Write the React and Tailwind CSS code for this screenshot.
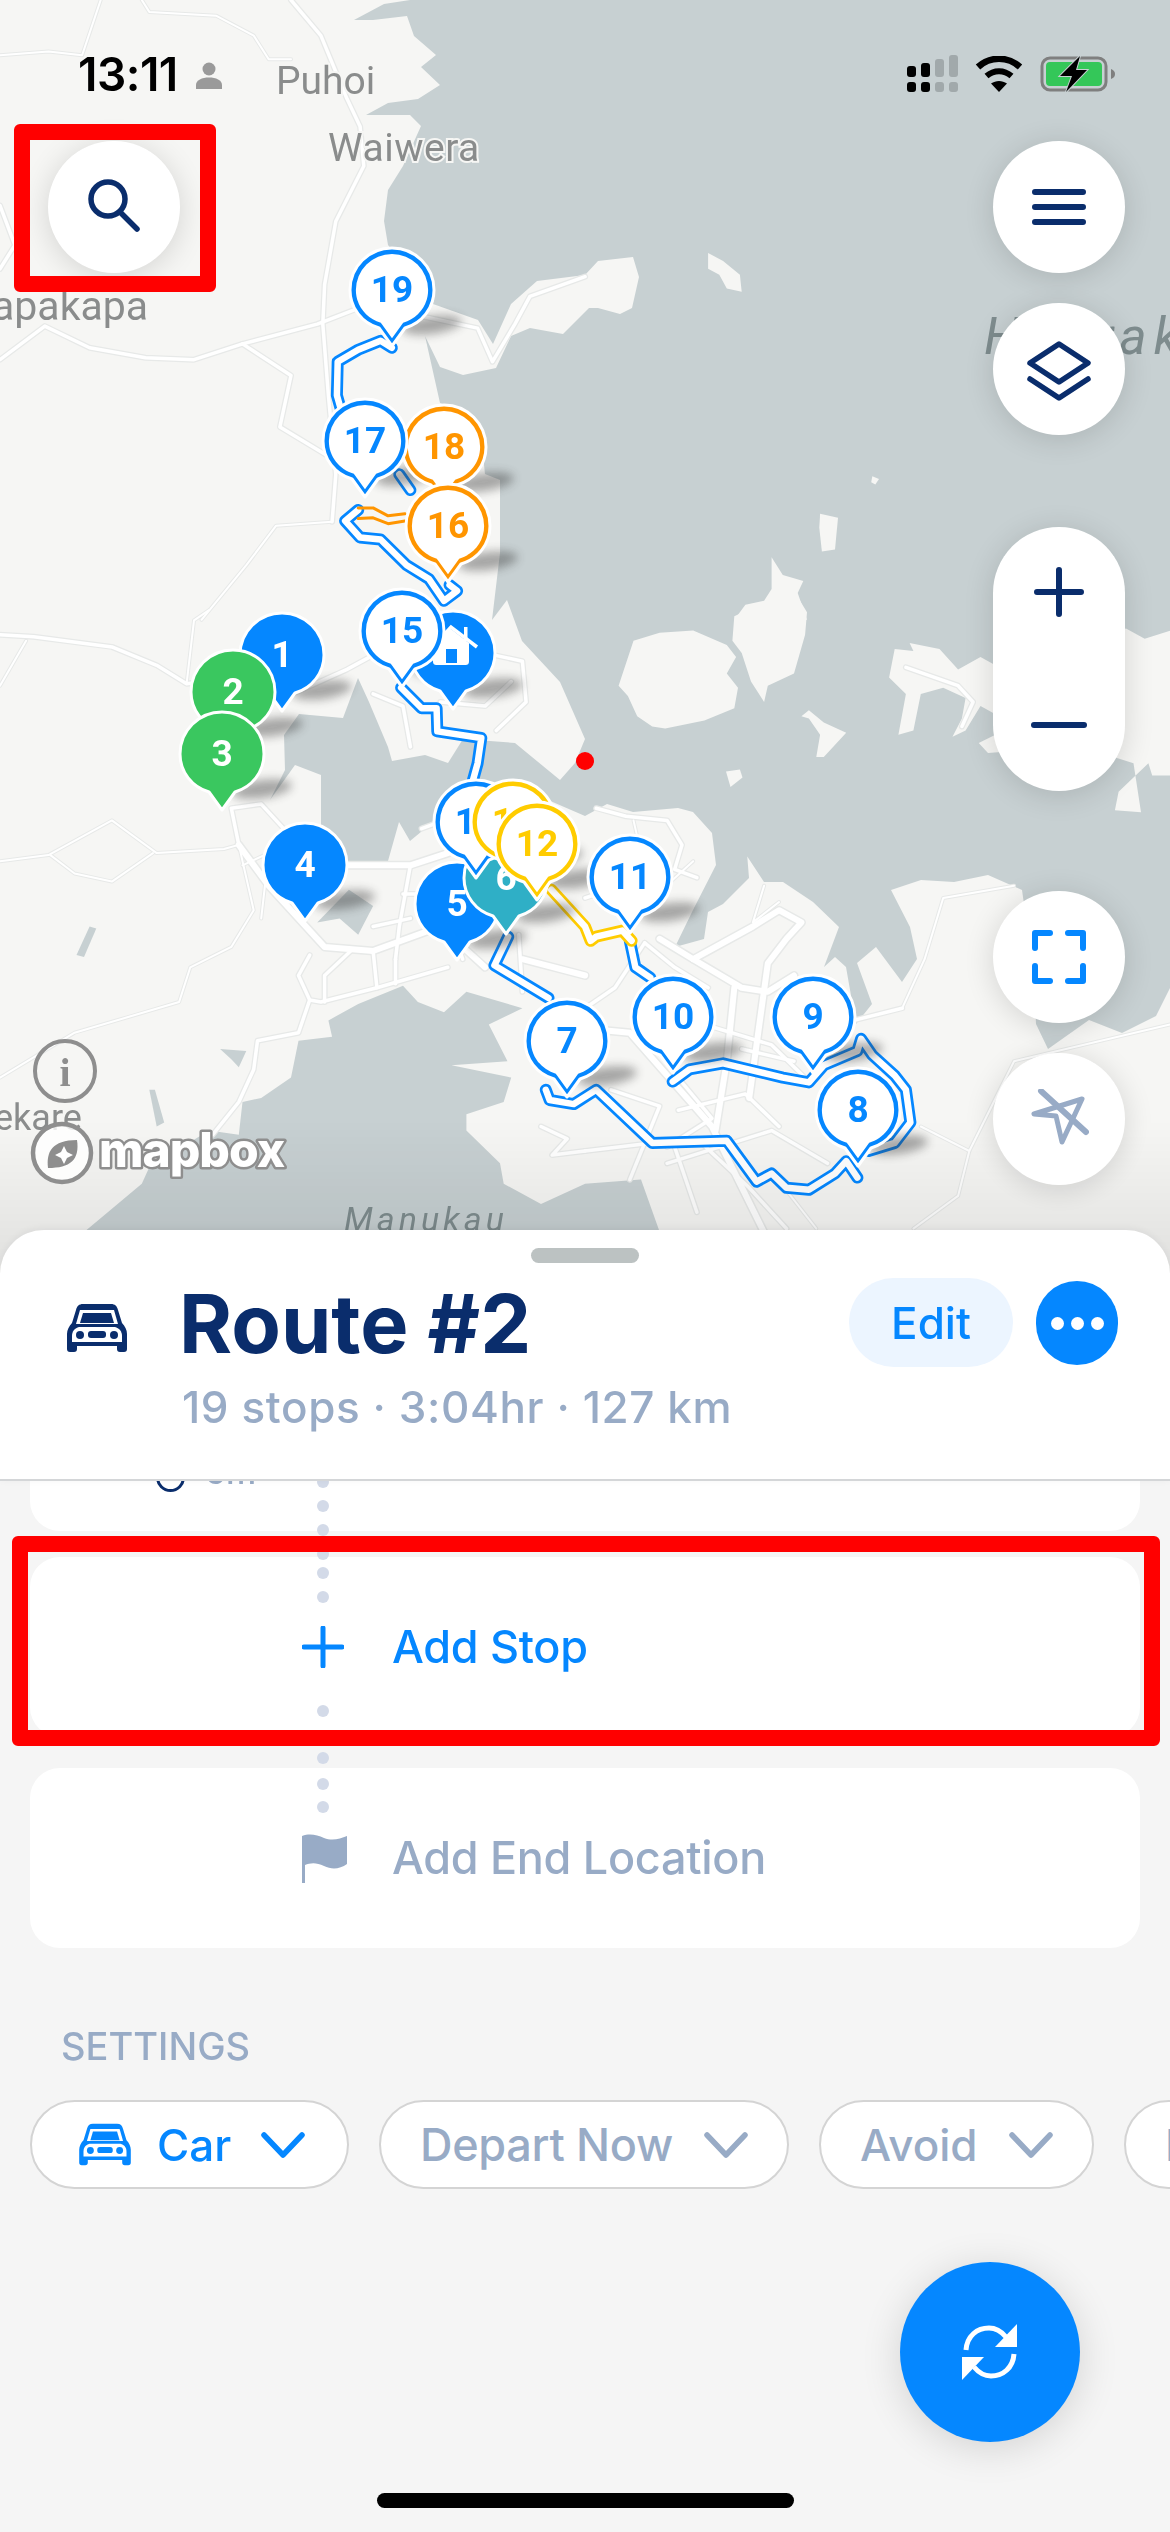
import React from "react";

const Z = { 1: [0, 0, 2.68, 2.53], 2: [585, 0, 2.68, 2.53], 3: [0, 600, 2.68, 2.45], 4: [585, 600, 2.68, 2.45] };
const P = (z, arr) => arr.map(([x, y]) => `${(Z[z][0] + x / Z[z][2]).toFixed(1)},${(Z[z][1] + y / Z[z][3]).toFixed(1)}`).join(" ");

const hauraki = "485,0 1170,0 1170,988 1156,1016 1122,1033 1089,1020 1048,1049 1036,1024 1033,967 1022,890 988,875 954,882 921,880 891,890 910,927 917,959 902,982 876,947 857,963 872,1004 856,1024 846,967 835,957 824,967 839,927 813,902 783,882 764,882 745,853 744,816 749,878 723,904 708,912 704,939 675,947 693,910 716,865 712,833 693,812 678,808 633,812 607,804 585,816 548,800 433,822 410,841 399,822 388,861 347,861 321,830 321,775 295,765 270,800 258,824 285,770 284,735 299,714 343,718 358,678 369,702 388,747 392,761 425,755 448,763 463,739 515,743 560,780 575,763 585,739 560,682 522,641 507,600 492,620 500,553 500,480 485,474 481,438 459,411 440,403 425,336 440,367 463,375 496,368 511,336 530,328 563,334 589,308 598,308 620,314 632,308 639,277 633,257 598,261 585,275 537,281 511,304 493,344 478,320 433,304 388,245 384,221 388,190 403,166 421,126 410,115 366,115 388,103 418,99 440,85 421,67 436,55 414,36 407,16 373,20 354,20 384,4 410,0";

const manukau = [[200, 1568], [380, 1430], [400, 1390], [560, 1300], [640, 1310], [650, 1230], [700, 1220], [780, 1170], [800, 1080], [890, 1070], [880, 1030], [960, 990], [1080, 945], [1120, 985], [1190, 1010], [1250, 960], [1400, 1000], [1310, 1040], [1360, 1130], [1210, 1140], [1370, 1170], [1350, 1230], [1250, 1260], [1250, 1300], [1340, 1380], [1350, 1430], [1450, 1480], [1568, 1430], [1718, 1420], [1788, 1600], [200, 1600]];

const islands4 = [
  [[90, 210], [130, 100], [200, 80], [290, 75], [380, 110], [405, 140], [380, 180], [410, 215], [400, 265], [320, 295], [215, 315], [180, 310], [140, 285], [115, 235]],
  [[395, 100], [400, 40], [470, 10], [575, 0], [595, 30], [590, 85], [560, 180], [490, 210], [480, 250], [445, 200], [420, 130]],
  [[580, 285], [600, 270], [640, 300], [700, 325], [640, 385], [620, 385], [630, 330], [600, 290]],
  [[378, 420], [415, 415], [422, 435], [390, 458]],
  [[815, 190], [830, 120], [880, 125], [870, 105], [950, 120], [1000, 170], [1060, 140], [1100, 160], [1100, 280], [1060, 260], [1020, 320], [985, 335], [1010, 290], [1020, 240], [960, 215], [900, 230], [880, 320], [840, 330], [860, 230]],
  [[1055, 350], [1100, 330], [1150, 370], [1080, 375]],
  [[1380, 90], [1450, 70], [1500, 95], [1568, 75], [1568, 430], [1520, 430], [1510, 400], [1430, 470], [1420, 515], [1490, 520], [1470, 400], [1400, 380]],
];
const islands2 = [
  [[330, 640], [370, 660], [415, 695], [420, 738], [380, 730], [360, 695], [330, 680]],
  [[770, 1205], [788, 1212], [778, 1226], [767, 1220]],
  [[630, 1300], [678, 1310], [670, 1390], [635, 1395], [628, 1335]],
  [[500, 1410], [530, 1455], [585, 1470], [570, 1500], [595, 1568], [400, 1568], [430, 1530], [480, 1520], [500, 1490]],
];
const lakes3 = [
  [[205, 870], [240, 800], [258, 805], [225, 875]],
  [[590, 1100], [660, 1105], [640, 1145], [620, 1125]],
  [[400, 1200], [415, 1200], [440, 1280], [420, 1290]],
  [[850, 790], [935, 710], [1000, 750], [960, 820], [910, 780]],
];
const urban3 = [
  [[640, 560], [760, 560], [930, 800], [1300, 640], [1568, 620], [1568, 1000], [1200, 1000], [1000, 960], [860, 990], [700, 800]],
  [[980, 200], [1140, 100], [1400, 60], [1500, 300], [1400, 400], [1100, 340]],
];

const roads = [
  [1, [[780, 0], [860, 90], [930, 250], [965, 320], [975, 420], [900, 560], [870, 720], [865, 820], [880, 1000], [900, 1200], [890, 1320]], 1],
  [1, [[0, 140], [130, 130], [220, 140], [270, 0]], 0],
  [1, [[380, 0], [400, 30], [580, 40], [680, 90], [720, 150], [780, 150]], 0],
  [1, [[0, 910], [120, 825], [240, 880], [390, 905], [520, 910], [650, 870], [850, 820], [960, 780]], 1],
  [1, [[650, 870], [780, 950], [750, 1080], [890, 1160]], 1],
  [1, [[960, 780], [1130, 800], [1280, 830], [1320, 915], [1380, 820], [1420, 750], [1568, 700]], 1],
  [1, [[890, 1320], [740, 1330], [660, 1430], [540, 1568]], 0],
  [1, [[0, 520], [40, 620], [0, 680]], 1],
  [3, [[0, 85], [90, 90], [300, 115], [420, 160], [500, 205], [640, 190], [760, 240], [930, 170], [1010, 130]], 1],
  [3, [[70, 100], [0, 210]], 0],
  [3, [[500, 205], [520, 50], [560, 25]], 0],
  [3, [[0, 640], [130, 625], [300, 540], [420, 620], [600, 610], [640, 600], [680, 760], [620, 850], [510, 900], [480, 985], [350, 1020], [200, 1060], [0, 1170]], 0],
  [3, [[135, 625], [200, 670], [300, 690], [410, 620]], 0],
  [3, [[640, 600], [620, 510], [700, 500], [760, 560]], 1],
  [3, [[930, 650], [1100, 650], [1200, 620]], 2],
  [3, [[640, 600], [720, 700], [870, 850], [1000, 860], [1180, 800], [1300, 900]], 2],
  [3, [[830, 870], [800, 920], [830, 980], [860, 985], [1010, 950], [1200, 900]], 1],
  [3, [[830, 980], [800, 1060], [690, 1080], [680, 1150], [640, 1230], [570, 1310]], 1],
  [3, [[1000, 860], [1010, 950]], 1],
  [3, [[1060, 880], [1060, 940]], 1],
  [3, [[1100, 650], [1070, 800], [1060, 880]], 1],
  [3, [[940, 860], [870, 920], [870, 985]], 1],
  [3, [[650, 650], [720, 620], [700, 780]], 0],
  [3, [[1000, 230], [1080, 260], [1100, 360]], 1],
  [3, [[1300, 130], [1400, 150], [1410, 250], [1330, 320]], 1],
  [3, [[1180, 250], [1300, 260], [1370, 200]], 1],
  [3, [[1130, 560], [1220, 530]], 1],
  [3, [[1400, 880], [1568, 920]], 2],
  [3, [[1390, 820], [1400, 960]], 1],
  [3, [[1450, 1290], [1520, 1320], [1480, 1360], [1568, 1350]], 1],
  [3, [[1080, 720], [1180, 720], [1240, 880]], 1],
  [3, [[1000, 800], [1100, 780]], 1],
  [4, [[200, 830], [290, 880], [420, 950], [490, 960], [560, 920]], 2],
  [4, [[290, 880], [450, 800], [520, 760], [580, 790], [540, 830], [490, 890], [440, 1220]], 2],
  [4, [[400, 950], [380, 1130], [350, 1300]], 2],
  [4, [[0, 1050], [120, 1060], [340, 1290], [410, 1420], [490, 1568]], 2],
  [4, [[180, 1330], [0, 1350]], 1],
  [4, [[220, 1380], [500, 1300], [650, 1380]], 1],
  [4, [[240, 1340], [300, 1500]], 1],
  [4, [[900, 1290], [1030, 1350], [1150, 1130], [1568, 1040]], 0],
  [4, [[1030, 1350], [1000, 1460], [880, 1540]], 0],
  [4, [[850, 1000], [910, 880], [960, 730], [1150, 700]], 0],
  [4, [[720, 1030], [850, 1000]], 1],
  [4, [[30, 510], [110, 530], [220, 540], [260, 600], [240, 660], [300, 680]], 1],
  [4, [[130, 540], [150, 620], [230, 690], [290, 640]], 0],
  [4, [[100, 700], [0, 730]], 1],
  [4, [[860, 165], [1000, 210], [1040, 250], [1010, 310]], 1],
  [4, [[480, 700], [450, 790], [520, 740]], 0],
  [4, [[70, 1200], [200, 1240], [120, 1420]], 1],
  [4, [[240, 1160], [340, 1270], [220, 1340]], 1],
  [4, [[160, 840], [240, 900], [330, 950]], 1],
  [4, [[420, 1100], [560, 1130]], 1],
  [4, [[320, 1040], [500, 1090], [600, 1180]], 1],
  [4, [[250, 1250], [430, 1210], [520, 1290]], 1],
  [4, [[300, 1320], [440, 1440], [540, 1540]], 1],
  [4, [[500, 1400], [620, 1540]], 0],
  [4, [[0, 1000], [80, 950], [160, 840]], 1],
];

const blueRoutes = [
  [1, [[1050, 880], [1020, 862], [960, 885], [905, 915], [903, 1000], [915, 1040]]],
  [1, [[1100, 1240], [1070, 1200]]],
  [1, [[960, 1290], [925, 1318], [965, 1360], [1020, 1365], [1090, 1430], [1150, 1465], [1190, 1520], [1225, 1495], [1205, 1480]]],
  [3, [[1075, 215], [1130, 265], [1170, 265], [1172, 322], [1290, 338], [1280, 400], [1265, 450]]],
  [3, [[1362, 825], [1325, 895], [1470, 975]]],
  [4, [[-105, 1200], [-95, 1225], [-30, 1235], [30, 1200], [180, 1330], [380, 1325], [460, 1425], [500, 1405], [540, 1440], [600, 1445], [670, 1405], [700, 1375], [730, 1415]]],
  [4, [[235, 1180], [280, 1150], [370, 1135], [530, 1170], [600, 1182], [640, 1140], [730, 1105], [740, 1075], [770, 1115], [830, 1165], [860, 1200], [872, 1280], [830, 1330], [760, 1350]]],
  [4, [[120, 835], [135, 900], [175, 925]]],
];
const orangeRoutes = [
  [1, [[960, 1285], [1000, 1285], [1040, 1305], [1085, 1300]]],
  [1, [[960, 1312], [1000, 1310], [1040, 1325], [1085, 1318]]],
];
const yellowRoutes = [
  [4, [[-90, 710], [0, 800], [15, 835], [30, 825], [100, 810], [125, 835]]],
];

const BLUE = "#0587ff";
const pins = [
  { n: "18", x: 444, y: 447, c: "#ff9500", t: "text-[#ff9500]", ring: true },
  { n: "19", x: 392, y: 290, c: BLUE, t: "text-[#0587ff]", ring: true },
  { n: "17", x: 365, y: 441, c: BLUE, t: "text-[#0587ff]", ring: true },
  { n: "16", x: 448, y: 526, c: "#ff9500", t: "text-[#ff9500]", ring: true },
  { n: "", x: 453, y: 653, c: BLUE, home: true },
  { n: "15", x: 402, y: 631, c: BLUE, t: "text-[#0587ff]", ring: true },
  { n: "1", x: 282, y: 655, c: BLUE, t: "text-white" },
  { n: "2", x: 233, y: 692, c: "#3ac75f", t: "text-white" },
  { n: "3", x: 222, y: 754, c: "#3ac75f", t: "text-white" },
  { n: "4", x: 305, y: 865, c: BLUE, t: "text-white" },
  { n: "5", x: 457, y: 904, c: BLUE, t: "text-white" },
  { n: "6", x: 506, y: 878, c: "#2fafc6", t: "text-white" },
  { n: "14", x: 476, y: 822, c: BLUE, t: "text-[#0587ff]", ring: true },
  { n: "13", x: 513, y: 822, c: "#ffcc00", t: "text-[#ffcc00]", ring: true },
  { n: "12", x: 537, y: 844, c: "#ffcc00", t: "text-[#ffcc00]", ring: true },
  { n: "11", x: 630, y: 877, c: BLUE, t: "text-[#0587ff]", ring: true },
  { n: "7", x: 567, y: 1041, c: BLUE, t: "text-[#0587ff]", ring: true },
  { n: "10", x: 673, y: 1017, c: BLUE, t: "text-[#0587ff]", ring: true },
  { n: "9", x: 813, y: 1017, c: BLUE, t: "text-[#0587ff]", ring: true },
  { n: "8", x: 858, y: 1110, c: BLUE, t: "text-[#0587ff]", ring: true },
];
const PIN = "M50 106 L37 88 C20 83 8 68 8 50 A42 42 0 0 1 92 50 C92 68 80 83 63 88 Z";

function Pin({ p }) {
  return (
    <div className="absolute w-[100px] h-[120px]" style={{ left: p.x - 50, top: p.y - 50 }}>
      <svg width="100" height="120" viewBox="0 0 100 120" className="absolute inset-0">
        <path d={PIN} fill={p.c} stroke="#fff" strokeWidth="3" strokeLinejoin="round" />
        {p.ring && <path d={PIN} fill="#fff" transform="translate(50 50) scale(0.86) translate(-50 -50)" />}
        {p.home && (
          <g>
            <path d="M28 46 L48 24 L74 44" fill="none" stroke="#fff" strokeWidth="3.5" />
            <rect x="61" y="24" width="3.5" height="14" fill="#fff" />
            <path d="M29 44 L48 26 L66 40 V58 C66 61 65 62 62 62 H34 C31 62 30 61 30 58Z" fill="#fff" />
            <rect x="43" y="46" width="11" height="14" fill={BLUE} />
          </g>
        )}
      </svg>
      {p.n && (
        <span className={`absolute inset-x-0 top-[26px] text-center font-['Roboto'] font-bold text-[37px] leading-[48px] ${p.t}`}>
          {p.n}
        </span>
      )}
    </div>
  );
}

const CarIcon = ({ c = "#0a2d6c", w = 62, h = 50 }) => (
  <svg width={w} height={h} viewBox="0 0 62 50">
    <path d="M17 1H45C49 1 51 3 52 7L56 20C59 23 61 27 61 31V46C61 48 60 49 58 49H54C52 49 51 48 51 46V43H11V46C11 48 10 49 8 49H4C2 49 1 48 1 46V31C1 27 3 23 6 20L10 7C11 3 13 1 17 1Z" fill={c} />
    <path d="M14 7H48L52 21H10Z" fill="#fff" />
    <path d="M17 10H45L48 20H14Z" fill={c} />
    <path d="M6 33C6 28 9 25 13 24H49C53 25 56 28 56 33V39H6Z" fill="#fff" />
    <circle cx="14" cy="32" r="4" fill={c} />
    <circle cx="48" cy="32" r="4" fill={c} />
    <rect x="22" y="28" width="18" height="7" rx="3" fill={c} />
  </svg>
);

const Chevron = ({ c }) => (
  <svg width="44" height="26" viewBox="0 0 44 26" className="shrink-0">
    <path d="M3 3L22 23L41 3" fill="none" stroke={c} strokeWidth="5.5" strokeLinecap="round" strokeLinejoin="round" />
  </svg>
);

const RoundBtn = ({ children, className = "" }) => (
  <div className={`w-[132px] h-[132px] rounded-full bg-white flex items-center justify-center shadow-[0_4px_30px_rgba(0,0,0,0.14)] ${className}`}>
    {children}
  </div>
);

const dotYs = [1482, 1506, 1530, 1554, 1573, 1597, 1711, 1758, 1784, 1807];

function MapArt() {
  return (
    <svg width="1170" height="1280" viewBox="0 0 1170 1280" className="absolute inset-0">
      <defs>
        <linearGradient id="fade" x1="0" y1="0" x2="0" y2="1">
          <stop offset="0" stopColor="#000" stopOpacity="0" />
          <stop offset="1" stopColor="#000" stopOpacity="0.09" />
        </linearGradient>
        <filter id="blur" x="-50%" y="-50%" width="200%" height="200%">
          <feGaussianBlur stdDeviation="5" />
        </filter>
      </defs>
      <rect width="1170" height="1280" fill="#f6f6f4" />
      <polygon points={hauraki} fill="#c7d0d2" />
      <polygon points={P(3, manukau)} fill="#c7d0d2" />
      {lakes3.map((l, i) => <polygon key={i} points={P(3, l)} fill="#c7d0d2" />)}
      {islands4.map((l, i) => <polygon key={i} points={P(4, l)} fill="#f6f6f4" />)}
      {islands2.map((l, i) => <polygon key={i} points={P(2, l)} fill="#f6f6f4" />)}
      <g fill="none" strokeLinejoin="round" strokeLinecap="round">
        {roads.map(([z, r, w], i) => <polyline key={i} points={P(z, r)} stroke="#e7e9e8" strokeWidth={w === 2 ? 9 : w === 1 ? 6 : 4} />)}
        {roads.map(([z, r, w], i) => <polyline key={i} points={P(z, r)} stroke="#ffffff" strokeWidth={w === 2 ? 6 : w === 1 ? 3.5 : 2} />)}
        {blueRoutes.map(([z, r], i) => <polyline key={i} points={P(z, r)} stroke={BLUE} strokeWidth="12" />)}
        {blueRoutes.map(([z, r], i) => <polyline key={i} points={P(z, r)} stroke="#fff" strokeWidth="6.5" />)}
        {yellowRoutes.map(([z, r], i) => <polyline key={i} points={P(z, r)} stroke="#ffcc00" strokeWidth="12" />)}
        {yellowRoutes.map(([z, r], i) => <polyline key={i} points={P(z, r)} stroke="#fff" strokeWidth="6.5" />)}
        {orangeRoutes.map(([z, r], i) => <polyline key={i} points={P(z, r)} stroke="#ff9500" strokeWidth="3" />)}
      </g>
      <circle cx="585" cy="761" r="9" fill="#ff0000" />
      <g filter="url(#blur)" fill="#3a3a3a" opacity="0.42">
        {pins.map((p, i) => (
          <ellipse key={i} cx={p.x + 40} cy={p.y + 35} rx="30" ry="9" transform={`rotate(-8 ${p.x + 40} ${p.y + 35})`} />
        ))}
      </g>
      <g fontFamily="Roboto, sans-serif" fill="#8a8c8c" stroke="#f6f6f4" strokeWidth="4" paintOrder="stroke" fontSize="39">
        <text x="276" y="94">Puhoi</text>
        <text x="328" y="161" letterSpacing="0.5">Waiwera</text>
        <text x="-8" y="320" fontSize="41">apakapa</text>
        <text x="-6" y="1130" fontSize="36">ekare</text>
      </g>
      <g fontFamily="Roboto, sans-serif" fontStyle="italic" fill="#7e8c8e">
        <text x="984" y="354" fontSize="52" letterSpacing="7">Hauraki</text>
        <text x="344" y="1231" fontSize="34" letterSpacing="4">Manukau</text>
      </g>
      <rect y="1120" width="1170" height="160" fill="url(#fade)" />
      <g fill="none" stroke="#8e8e8e" strokeWidth="4">
        <circle cx="65" cy="1071" r="30" />
        <circle cx="62" cy="1153" r="29" fill="#fff" fillOpacity="0.8" strokeWidth="4.5" />
      </g>
      <text x="65" y="1086" textAnchor="middle" fontFamily="Liberation Serif, serif" fontSize="40" fontWeight="700" fill="#8e8e8e">i</text>
      <path d="M48 1168C46 1152 52 1140 77 1140C80 1160 70 1168 48 1168Z" fill="#8e8e8e" />
      <path d="M64 1146L67 1152L73 1155L67 1158L64 1164L61 1158L55 1155L61 1152Z" fill="#fff" />
      <text x="99" y="1167" fontFamily="Inter, sans-serif" fontWeight="800" fontSize="48" letterSpacing="-1" fill="#fff" stroke="#8e8e8e" strokeWidth="5" paintOrder="stroke" strokeLinejoin="round">mapbox</text>
    </svg>
  );
}

export default function App() {
  return (
    <div className="relative w-[1170px] h-[2532px] overflow-hidden bg-[#f5f5f5] font-['Inter',sans-serif]">
      {/* Map */}
      <div className="relative h-[1280px] overflow-hidden">
        <MapArt />
        {pins.map((p, i) => <Pin key={i} p={p} />)}

        {/* status bar */}
        <div className="absolute left-[78px] top-[48px] flex items-center gap-[18px]">
          <span className="text-[46px] leading-[52px] font-semibold text-black tracking-[-0.5px]">13:11</span>
          <svg width="26" height="27" viewBox="0 0 26 27" className="mt-[2px]">
            <circle cx="13" cy="7" r="6.5" fill="#9a9a9a" />
            <path d="M0 27V23C0 18 6 15.5 13 15.5S26 18 26 23V27Z" fill="#9a9a9a" />
          </svg>
        </div>
        <div className="absolute left-[907px] top-[55px] flex items-center gap-[17px]">
          <svg width="51" height="38" viewBox="0 0 51 38">
            <g fill="#000">
              <rect x="0" y="11" width="9" height="11" rx="3" /><rect x="14" y="8" width="9" height="14" rx="3" />
              <rect x="0" y="27" width="9" height="10" rx="3" /><rect x="14" y="27" width="9" height="10" rx="3" />
            </g>
            <g fill="#a1a9ab">
              <rect x="28" y="4" width="9" height="18" rx="3" /><rect x="42" y="0" width="9" height="22" rx="3" />
              <rect x="28" y="27" width="9" height="10" rx="3" /><rect x="42" y="27" width="9" height="10" rx="3" />
            </g>
          </svg>
          <svg width="48" height="36" viewBox="0 0 48 36">
            <path d="M3 11C15 0 33 0 45 11" fill="none" stroke="#000" strokeWidth="6.5" />
            <path d="M11.5 20C19 13.5 29 13.5 36.5 20" fill="none" stroke="#000" strokeWidth="6" />
            <path d="M24 36L16 27.5C21 24 27 24 32 27.5Z" fill="#000" />
          </svg>
          <svg width="76" height="38" viewBox="0 0 76 38">
            <rect x="2" y="3" width="64" height="32" rx="8" fill="none" stroke="#7f7f7f" strokeWidth="3" />
            <rect x="6" y="7" width="56" height="24" rx="4" fill="#34c759" />
            <path d="M71 14C74 15 75 17 75 19S74 23 71 24Z" fill="#7f7f7f" />
            <path d="M40 1L20 21H32L26 37L47 15H36Z" fill="#000" stroke="#c7d0d2" strokeWidth="2" paintOrder="stroke" />
          </svg>
        </div>

        {/* left search */}
        <RoundBtn className="absolute left-[48px] top-[141px]">
          <svg width="56" height="56" viewBox="0 0 56 56">
            <circle cx="22" cy="20" r="17" fill="none" stroke="#0a2d6c" strokeWidth="5.5" />
            <path d="M34 33L51 50" stroke="#0a2d6c" strokeWidth="5.5" strokeLinecap="round" />
          </svg>
        </RoundBtn>

        {/* right buttons */}
        <RoundBtn className="absolute left-[993px] top-[141px]">
          <svg width="54" height="36" viewBox="0 0 54 36">
            <path d="M3 3H51M3 18H51M3 33H51" stroke="#0a2d6c" strokeWidth="6" strokeLinecap="round" />
          </svg>
        </RoundBtn>
        <RoundBtn className="absolute left-[993px] top-[303px]">
          <svg width="64" height="60" viewBox="0 0 64 60" className="mt-[4px]">
            <path d="M32 3L61 22L32 41L3 22Z" fill="none" stroke="#0a2d6c" strokeWidth="5.5" strokeLinejoin="round" />
            <path d="M3 38L32 57L61 38" fill="none" stroke="#0a2d6c" strokeWidth="5.5" strokeLinecap="round" strokeLinejoin="round" />
          </svg>
        </RoundBtn>
        <div className="absolute left-[993px] top-[527px] w-[132px] h-[264px] rounded-full bg-white flex flex-col items-center shadow-[0_4px_30px_rgba(0,0,0,0.14)]">
          <svg width="50" height="50" viewBox="0 0 50 50" className="mt-[40px] shrink-0">
            <path d="M25 3V47M3 25H47" stroke="#0a2d6c" strokeWidth="6" strokeLinecap="round" />
          </svg>
          <svg width="56" height="8" viewBox="0 0 56 8" className="mt-[104px] shrink-0">
            <path d="M3 4H53" stroke="#0a2d6c" strokeWidth="6" strokeLinecap="round" />
          </svg>
        </div>
        <RoundBtn className="absolute left-[993px] top-[891px]">
          <svg width="54" height="54" viewBox="0 0 54 54">
            <path d="M18 3H3V18M36 3H51V18M3 36V51H18M51 36V51H36" fill="none" stroke="#0587ff" strokeWidth="6" strokeLinecap="round" strokeLinejoin="round" />
          </svg>
        </RoundBtn>
        <RoundBtn className="absolute left-[993px] top-[1053px]">
          <svg width="60" height="60" viewBox="0 0 60 60">
            <path d="M53 10L5 25L27 27L33 53Z" fill="none" stroke="#98abc6" strokeWidth="5" strokeLinejoin="round" />
            <path d="M12 2L57 43" stroke="#98abc6" strokeWidth="6" strokeLinecap="round" />
          </svg>
        </RoundBtn>
      </div>

      {/* Sheet */}
      <div className="relative -mt-[50px]">
        <div className="h-[251px] rounded-t-[44px] bg-white border-b-2 border-[#d4d6d8] relative z-10 shadow-[0_-2px_10px_rgba(0,0,0,0.06)]">
          <div className="pt-[18px] flex justify-center">
            <div className="w-[108px] h-[15px] rounded-full bg-[#bcc2c2]" />
          </div>
          <div className="mt-[15px] pl-[66px] pr-[52px] flex items-start">
            <div className="mt-[25px] w-[116px] shrink-0"><CarIcon /></div>
            <div className="flex-1">
              <div className="text-[81px] leading-[92px] font-bold text-[#0a2d6c] -ml-[3px]">Route #2</div>
              <div className="mt-[11px] text-[44px] leading-[52px] font-medium text-[#98abc6] tracking-[0.6px]">19 stops · 3:04hr · 127 km</div>
            </div>
            <div className="w-[164px] h-[89px] rounded-full bg-[#ecf5ff] flex items-center justify-center text-[44px] font-medium text-[#0587ff]">Edit</div>
            <div className="ml-[23px] mt-[3px] w-[82px] h-[84px] rounded-full bg-[#0587ff] flex items-center justify-center gap-[7px]">
              <span className="w-[13px] h-[13px] rounded-full bg-white" />
              <span className="w-[13px] h-[13px] rounded-full bg-white" />
              <span className="w-[13px] h-[13px] rounded-full bg-white" />
            </div>
          </div>
        </div>

        <div className="px-[30px]">
          <div className="h-[51px] bg-white rounded-b-[30px] overflow-hidden flex items-start pl-[126px] gap-[20px] -mt-[1px]">
            <div className="w-[29px] h-[29px] rounded-full border-[3px] border-[#0a2d6c] -mt-[17px] shrink-0" />
            <span className="text-[34px] leading-[40px] font-medium text-[#98abc6] -mt-[28px]">5m</span>
          </div>
          <div className="mt-[26px] h-[180px] rounded-[30px] bg-white flex items-center pl-[272px]">
            <svg width="42" height="42" viewBox="0 0 42 42" className="shrink-0">
              <path d="M21 2V40M2 21H40" stroke="#0587ff" strokeWidth="5" strokeLinecap="round" />
            </svg>
            <span className="ml-[48px] text-[45px] font-medium text-[#0587ff] tracking-[-0.3px]">Add Stop</span>
          </div>
          <div className="mt-[31px] h-[180px] rounded-[30px] bg-white flex items-center pl-[272px]">
            <svg width="45" height="49" viewBox="0 0 45 49" className="shrink-0">
              <path d="M0 2C8 -1 15 1 22 4C30 7 38 5 45 2V30C38 35 30 36 22 32C14 28 8 29 3 31V49H0Z" fill="#98abc6" />
            </svg>
            <span className="ml-[45px] text-[45px] font-medium text-[#98abc6] tracking-[-0.3px]">Add End Location</span>
          </div>
          <div className="mt-[76px] pl-[31px] text-[38px] leading-[44px] font-medium text-[#98abc6]">SETTINGS</div>
          <div className="mt-[32px] flex gap-[30px] w-[1400px]">
            <div className="h-[89px] w-[319px] shrink-0 rounded-full bg-white border-2 border-[#d4d4d4] flex items-center pl-[46px]">
              <CarIcon c="#0587ff" w={54} h={43} />
              <span className="ml-[25px] text-[44px] font-medium text-[#0587ff]">Car</span>
              <span className="ml-[30px]"><Chevron c="#0587ff" /></span>
            </div>
            <div className="h-[89px] w-[410px] shrink-0 rounded-full bg-white border-2 border-[#d4d4d4] flex items-center pl-[39px]">
              <span className="text-[45px] font-medium text-[#98abc6] tracking-[-0.3px]">Depart Now</span>
              <span className="ml-[31px]"><Chevron c="#98abc6" /></span>
            </div>
            <div className="h-[89px] w-[275px] shrink-0 rounded-full bg-white border-2 border-[#d4d4d4] flex items-center pl-[39px]">
              <span className="text-[44px] font-medium text-[#98abc6]">Avoid</span>
              <span className="ml-[31px]"><Chevron c="#98abc6" /></span>
            </div>
            <div className="h-[89px] w-[275px] shrink-0 rounded-full bg-white border-2 border-[#d4d4d4] flex items-center pl-[39px]">
              <span className="text-[44px] font-medium text-[#98abc6]">Driver</span>
            </div>
          </div>
        </div>
      </div>

      {/* dotted connector */}
      {dotYs.map((y) => (
        <div key={y} className="absolute left-[317px] w-[12px] h-[12px] rounded-full bg-[#d3dae8]" style={{ top: y - 6 }} />
      ))}

      {/* FAB */}
      <div className="absolute left-[900px] top-[2262px] w-[180px] h-[180px] rounded-full bg-[#0587ff] flex items-center justify-center shadow-[0_6px_40px_rgba(0,0,0,0.14)]">
        <svg width="56" height="56" viewBox="0 0 56 56">
          <path d="M4 26C5 12 15 4 27 4C33 4 39 7 44 13" fill="none" stroke="#fff" strokeWidth="5" />
          <path d="M55 0V23H33Z" fill="#fff" />
          <path d="M52 30C51 44 41 52 29 52C23 52 17 49 12 43" fill="none" stroke="#fff" strokeWidth="5" />
          <path d="M0 56V33H22Z" fill="#fff" />
        </svg>
      </div>

      {/* home indicator */}
      <div className="absolute left-[377px] top-[2493px] w-[417px] h-[15px] rounded-full bg-black" />

      {/* annotation rectangles */}
      <div className="absolute left-[14px] top-[124px] w-[202px] h-[168px] border-[16px] border-[#ff0000] rounded-[6px]" />
      <div className="absolute left-[12px] top-[1536px] w-[1148px] h-[210px] border-[16px] border-[#ff0000] rounded-[6px]" />
    </div>
  );
}
